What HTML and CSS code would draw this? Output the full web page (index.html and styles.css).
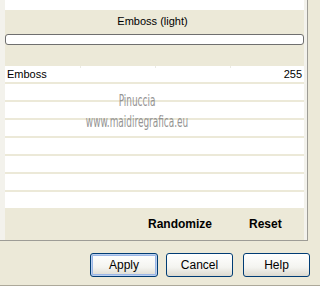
FILE: index.html
```html
<!DOCTYPE html>
<html lang="en">
<head>
    <meta charset="UTF-8" />
    <title>Emboss (light)</title>
    <link rel="stylesheet" href="styles.css">
</head>
<body>
    <div class="dialog">
        <div class="panel">
            <div class="content">
                <div class="top-strip"></div>
                <div class="title">Emboss (light)</div>
                <div class="bar"></div>

                <div class="rows">
                    <div class="row ticks">
                        <span>Emboss</span>
                        <span>255</span>
                    </div>
                    <div class="row"></div>
                    <div class="row"></div>
                    <div class="row"></div>
                    <div class="row"></div>
                    <div class="row"></div>
                    <div class="row"></div>
                    <div class="row"></div>

                    <!-- watermark -->
                    <div class="watermark">
                        <div>Pinuccia</div>
                        <div>www.maidiregrafica.eu</div>
                    </div>
                </div>

                <div class="actions">
                    <span class="randomize">Randomize</span>
                    <span class="reset">Reset</span>
                </div>
            </div>
        </div>

        <div class="buttons">
            <button class="btn default">Apply</button>
            <button class="btn cancel">Cancel</button>
            <button class="btn help">Help</button>
        </div>
    </div>
</body>
</html>
```

FILE: styles.css
```css
* {
    margin: 0;
    padding: 0;
    box-sizing: border-box;
}
body {
    font-family: 'Liberation Sans', Arial, sans-serif;
    font-size: 11px;
    color: #000;
    background-color: #ece9d8;
    width: 320px;
    height: 286px;
    overflow: hidden;
}
.dialog {
    height: 286px;
    border-bottom: 1px solid #aca899;
}
.panel {
    width: 308px;
    height: 241px;
    padding-left: 5px;
    padding-right: 3px;
    background-color: #f3f2ec;
    border-right: 1px solid #9d9c96;
    border-bottom: 1px solid #9d9c96;
}
.content {
    background-color: #ece9d8;
    height: 240px;
}
.top-strip {
    height: 10px;
    background-color: #fff;
}
.title {
    height: 24px;
    line-height: 23px;
    text-align: center;
    padding-right: 4px;
}
.bar {
    width: 299px;
    height: 11px;
    background-color: #fff;
    border: 1px solid #6f6f6f;
    border-radius: 3px;
}
.rows {
    position: relative;
    margin-top: 21px;
    display: flex;
    flex-direction: column;
    gap: 2px;
}
.row {
    height: 16px;
    background-color: #fff;
    display: flex;
    justify-content: space-between;
    align-items: center;
    padding: 0 2px 0 2px;
}
.ticks {
    background-image:
        linear-gradient(#ebebe4, #ebebe4),
        linear-gradient(#ebebe4, #ebebe4),
        linear-gradient(#ebebe4, #ebebe4);
    background-size: 1px 2px, 1px 2px, 1px 2px;
    background-repeat: no-repeat, no-repeat, no-repeat;
    background-position: 75px 0, 150px 0, 225px 0;
}
.watermark {
    position: absolute;
    left: 32px;
    top: 24px;
    width: 200px;
    text-align: center;
    font-family: 'DejaVu Sans Condensed', 'DejaVu Sans', sans-serif;
    font-size: 16px;
    line-height: 21px;
    color: #949494;
    transform: scaleX(0.62);
    transform-origin: center;
}
.actions {
    height: 30px;
    display: flex;
    align-items: center;
    font-size: 12px;
    font-weight: bold;
    padding-top: 2px;
}
.randomize {
    margin-left: 143px;
}
.reset {
    margin-left: 37px;
}
.buttons {
    display: flex;
    padding-top: 12px;
    padding-left: 90px;
}
.btn {
    width: 67px;
    height: 24px;
    font-family: 'Liberation Sans', Arial, sans-serif;
    font-size: 12px;
    color: #000;
    border: 1px solid #003c74;
    border-radius: 3px;
    background: linear-gradient(#ffffff, #f4f4f0 60%, #dcdad0);
}
.default {
    width: 68px;
    box-shadow: inset 0 0 0 1px #bcd0ef, inset 0 0 0 2px #9ab6e6;
}
.cancel {
    margin-left: 8px;
}
.help {
    margin-left: 10px;
}
```
